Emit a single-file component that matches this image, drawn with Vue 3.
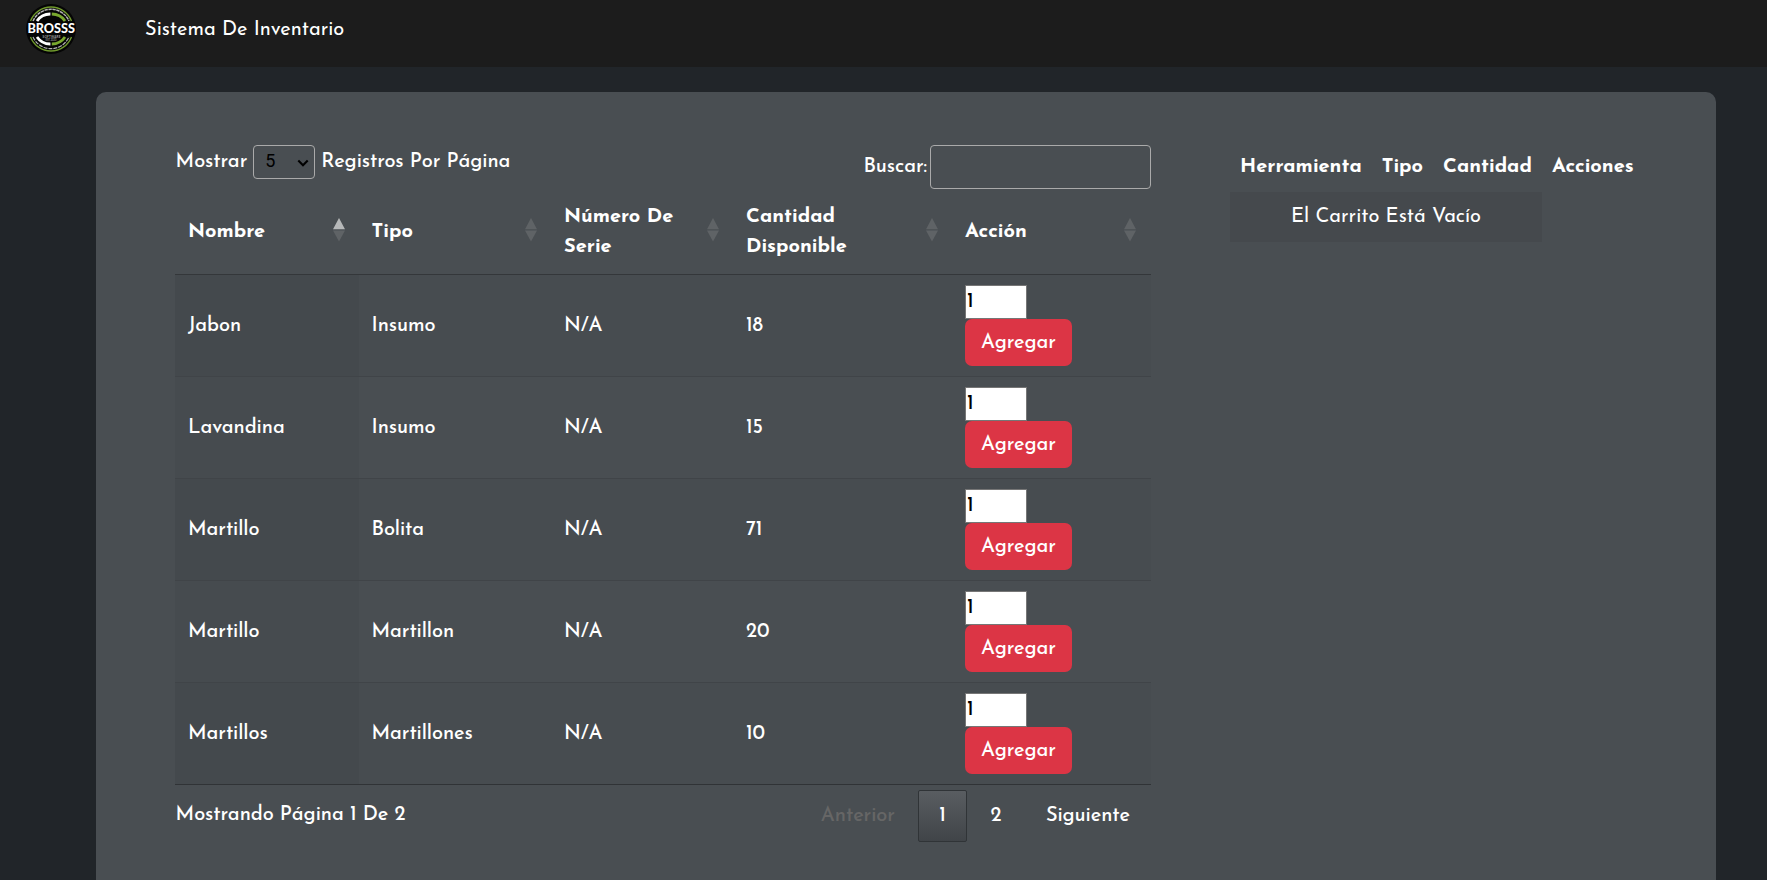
<script setup>
import { ref } from 'vue'

const columns = [
  { lines: ['Nombre'], sorted: true },
  { lines: ['Tipo'] },
  { lines: ['Número De', 'Serie'] },
  { lines: ['Cantidad', 'Disponible'] },
  { lines: ['Acción'] }
]

const rows = ref([
  { name: 'Jabon', type: 'Insumo', stock: '18', qty: 1 },
  { name: 'Lavandina', type: 'Insumo', stock: '15', qty: 1 },
  { name: 'Martillo', type: 'Bolita', stock: '71', qty: 1 },
  { name: 'Martillo', type: 'Martillon', stock: '20', qty: 1 },
  { name: 'Martillos', type: 'Martillones', stock: '10', qty: 1 }
])

const cartColumns = ['Herramienta', 'Tipo', 'Cantidad', 'Acciones']
</script>

<template>
  <div class="page">
    <header class="navbar">
      <svg class="logo" viewBox="0 0 50 50" width="50" height="50">
        <circle cx="25" cy="25" r="25" fill="#050505" />
        <g fill="none">
          <path d="M4.5 17A22 22 0 0 1 45.5 17" stroke="#6f982c" stroke-width="1.4" />
          <path d="M4.5 33A22 22 0 0 0 45.5 33" stroke="#6f982c" stroke-width="1.4" />
          <path d="M7 17A19.7 19.7 0 0 1 43 17" stroke="#b4b4b4" stroke-width="1.5" stroke-dasharray="3.4 .6" />
          <path d="M7 33A19.7 19.7 0 0 0 43 33" stroke="#b4b4b4" stroke-width="1.2" stroke-dasharray="4 1" />
          <path d="M11 17A16 16 0 0 1 24.4 10" stroke="#fff" stroke-width="2.8" />
          <path d="M25.8 10A16 16 0 0 1 39 17" stroke="#79a82e" stroke-width="2.8" />
          <path d="M11 33A16 16 0 0 0 24.4 40" stroke="#fff" stroke-width="2.8" />
          <path d="M25.8 40A16 16 0 0 0 39 33" stroke="#79a82e" stroke-width="2.8" />
        </g>
        <rect x="1" y="18.5" width="48" height="13" fill="#050505" />
        <text class="brand" x="1.4" y="29.4" textLength="47.6" lengthAdjust="spacingAndGlyphs">BROSSS</text>
        <text class="brand-sub" x="16.5" y="33.8" textLength="18">SOFTWARE</text>
        <text class="brand-sub faint" x="19.5" y="37" textLength="11">EST. 2020</text>
      </svg>
      <span class="t">Sistema De Inventario</span>
    </header>

    <main class="card">
      <section class="inventory">
        <div class="toolbar">
          <div class="length">
            <span class="t">Mostrar</span>
            <div class="select">
              <span class="select-value">5</span>
              <svg width="12" height="9" viewBox="0 0 12 9"><path d="M1.3 1.6 6 6.3l4.7-4.7" fill="none" stroke="#000" stroke-width="2.1" /></svg>
            </div>
            <span class="t">Registros Por Página</span>
          </div>
          <label class="search">
            <span class="t">Buscar:</span>
            <input type="text" />
          </label>
        </div>

        <div class="row head">
          <div v-for="(col, i) in columns" :key="i" class="cell">
            <div class="label">
              <span v-for="line in col.lines" :key="line" class="t">{{ line }}</span>
            </div>
            <svg class="sort" width="12" height="24" viewBox="0 0 12 24">
              <path d="M6 0 12 11.2H0z" :fill="col.sorted ? '#b6b8b9' : '#5f6366'" />
              <path d="M0 12.4h12L6 23.6z" fill="#5f6366" />
            </svg>
          </div>
        </div>

        <div v-for="(row, i) in rows" :key="i" class="row body">
          <div class="cell first"><span class="t">{{ row.name }}</span></div>
          <div class="cell"><span class="t">{{ row.type }}</span></div>
          <div class="cell"><span class="t">N/A</span></div>
          <div class="cell"><span class="t">{{ row.stock }}</span></div>
          <div class="cell action">
            <input v-model="row.qty" class="qty" />
            <button class="add">Agregar</button>
          </div>
        </div>

        <div class="footer">
          <span class="t info">Mostrando Página 1 De 2</span>
          <nav class="pager">
            <span class="pg disabled">Anterior</span>
            <span class="pg current">1</span>
            <span class="pg">2</span>
            <span class="pg">Siguiente</span>
          </nav>
        </div>
      </section>

      <aside class="cart">
        <div class="cart-head">
          <span v-for="c in cartColumns" :key="c" class="t">{{ c }}</span>
        </div>
        <div class="cart-empty"><span class="t">El Carrito Está Vacío</span></div>
      </aside>
    </main>
  </div>
</template>

<style>
html,
body {
  margin: 0;
  background: #212529;
  overflow: hidden;
}
</style>

<style scoped>
* {
  box-sizing: border-box;
}
.page {
  height: 880px;
  overflow: hidden;
  background: #212529;
  color: #fff;
  font: 500 20px/30px "Josefin Sans", Lato, sans-serif;
  letter-spacing: -0.08px;
}
.t {
  display: block;
  white-space: nowrap;
}
.navbar {
  display: flex;
  align-items: flex-start;
  height: 67px;
  background: #1c1c1c;
  padding: 4px 0 0 26px;
}
.navbar .t {
  margin: 11px 0 0 69px;
  font-weight: 400;
  letter-spacing: 0;
}
.logo {
  display: block;
  letter-spacing: 0;
}
.brand {
  font: 900 12.5px Lato, sans-serif;
  fill: #fff;
}
.brand-sub {
  font: 700 3px Lato, sans-serif;
  fill: #aaa;
}
.faint {
  fill: #777;
}
.card {
  display: flex;
  margin: 25px 51px 0 96px;
  height: 900px;
  padding: 53px 0 0 79px;
  border-radius: 10px;
  background: #494e52;
}
.inventory {
  width: 976px;
}
.toolbar {
  display: flex;
  justify-content: space-between;
  height: 50px;
}
.length {
  display: flex;
  align-items: flex-start;
  padding-left: 0.6px;
}
.length .t {
  margin-top: 2px;
}
.select {
  display: flex;
  align-items: center;
  justify-content: space-between;
  width: 62px;
  height: 34px;
  margin: 0 6px;
  padding: 0 5px 0 11px;
  border: 1px solid #aaa;
  border-radius: 4px;
  color: #000;
}
.select svg {
  margin-top: 2px;
}
.select-value {
  font: 18px/30px Roboto, "Noto Sans", sans-serif;
  padding-bottom: 2px;
}
.search {
  display: flex;
}
.search .t {
  margin: 7px 3px 0 0;
}
.search input {
  width: 221px;
  height: 44px;
  border: 1px solid #aaa;
  border-radius: 4px;
  background: transparent;
}
.row {
  display: grid;
  grid-template-columns: 183.5px 192.5px 182px 219px 199px;
}
.cell {
  display: flex;
  align-items: center;
  padding: 0 0 0 13px;
}
.head {
  height: 80px;
  border-bottom: 1px solid #34373a;
  font-weight: 700;
  letter-spacing: 0;
}
.head .cell {
  justify-content: space-between;
  padding: 0 14px 10px 13px;
}
.head .cell:last-child {
  padding-right: 15px;
}
.label {
  margin-top: 5px;
}
.sort {
  flex: none;
}
.body {
  height: 102px;
  border-bottom: 1px solid #404448;
}
.body:nth-of-type(odd) {
  background: #474c50;
}
.body .first {
  background: #464b4f;
}
.body:nth-of-type(odd) .first {
  background: #44494d;
}
.body:nth-of-type(7) {
  border-bottom-color: #303336;
}
.body .action {
  flex-direction: column;
  align-items: flex-start;
  justify-content: flex-start;
  padding-top: 10px;
}
.qty {
  width: 62px;
  height: 34px;
  margin: 0;
  border: 1px solid #767676;
  border-radius: 0;
  padding: 0 0 0 1px;
  background: #fff;
  color: #000;
  font: 500 20px/30px "Josefin Sans", Lato, sans-serif;
}
.add {
  width: 107px;
  height: 47px;
  border: 0;
  border-radius: 7px;
  padding: 9px 0 8px;
  background: #dc3545;
  color: #fff;
  font: inherit;
  letter-spacing: inherit;
  text-align: center;
}
.footer {
  display: flex;
  justify-content: space-between;
}
.info {
  margin: 15px 0 0 0.6px;
}
.pager {
  display: flex;
  gap: 2.5px;
  margin-top: 5px;
}
.pg {
  height: 52px;
  padding: 10px 20px 0;
  border: 1px solid transparent;
  border-radius: 2px;
}
.disabled {
  color: #666;
}
.current {
  border-color: #303437;
  background: linear-gradient(#595d61, #404448);
}
.cart {
  margin-left: 79px;
}
.cart-head {
  display: flex;
  height: 47px;
  padding: 7px 0 0 10px;
  gap: 20px;
  font-weight: 700;
  letter-spacing: 0;
}
.cart-empty {
  display: flex;
  justify-content: center;
  width: 312px;
  height: 50px;
  padding-top: 10px;
  background: #45494d;
  font-weight: 400;
  letter-spacing: 0;
}
</style>
